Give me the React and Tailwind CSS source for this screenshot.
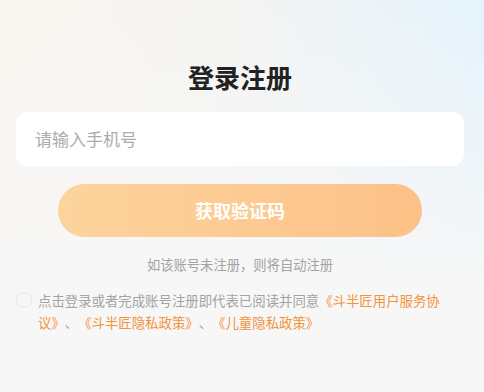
import React, { useState } from "react";

const App = () => {
  const [agreed, setAgreed] = useState(false);

  return (
    <div
      className="w-[484px] h-[392px] overflow-hidden bg-[linear-gradient(to_bottom,transparent_0%,#f7f7f7_75%),linear-gradient(to_right,#faf6f0_0%,#f4f4f3_50%,#e4f3fc_100%)] [text-spacing-trim:space-all]"
      style={{ fontFamily: '"Noto Sans CJK SC", "Noto Sans", sans-serif' }}
    >
      <div className="pt-[58px] pr-[4px] flex justify-center">
        <h1 className="text-[26px] leading-[38px] font-bold text-[#222222]">登录注册</h1>
      </div>

      <div className="mt-[16px] ml-[16px] mr-[20px] h-[54px] bg-white rounded-[12px] flex items-center px-[19px]">
        <input
          type="tel"
          placeholder="请输入手机号"
          className="w-full bg-transparent outline-none text-[17px] text-[#333] placeholder:text-[#ababab]"
        />
      </div>

      <div className="mt-[18px] pr-[4px] flex justify-center">
        <button className="w-[364px] h-[53px] rounded-full bg-[linear-gradient(to_right,#fdd49d,#fcc187)] text-white text-[18px] font-bold">
          获取验证码
        </button>
      </div>

      <p className="mt-[18px] pr-[4px] text-center text-[13.3px] leading-[20px] text-[#a3a3a3]">
        如该账号未注册，则将自动注册
      </p>

      <div className="mt-[14px] flex pl-[16px] pr-[38px]">
        <button
          onClick={() => setAgreed(!agreed)}
          className={`mt-[3px] w-[16px] h-[16px] rounded-full border shrink-0 ${
            agreed ? "bg-[#f3933a] border-[#f3933a]" : "border-[#e6e6e6] bg-transparent"
          }`}
        />
        <p className="ml-[6px] text-[13.4px] leading-[22px] text-[#a3a3a3]">
          点击登录或者完成账号注册即代表已阅读并同意
          <span className="text-[#f3933a]">《斗半匠用户服务协议》</span>、
          <span className="text-[#f3933a]">《斗半匠隐私政策》</span>、
          <span className="text-[#f3933a]">《儿童隐私政策》</span>
        </p>
      </div>
    </div>
  );
};

export default App;
